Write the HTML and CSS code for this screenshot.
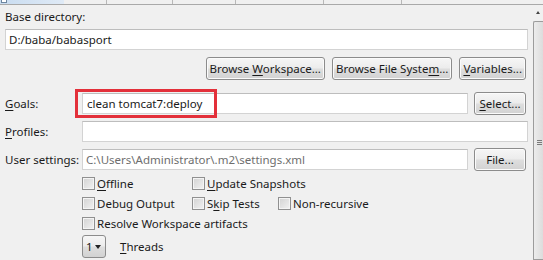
FILE: index.html
```html
<!DOCTYPE html>
<html>
<head>
<meta charset="utf-8">
<link rel="stylesheet" href="styles.css">
</head>
<body>
<div class="page">
  <div class="tabs">
    <div class="tab sel"><span class="ticon"></span></div>
    <div class="tab t2"></div>
    <div class="tab t3"></div>
    <div class="tab t4"></div>
    <div class="tab t5"></div>
    <div class="tab t6"></div>
    <div class="tab rest"></div>
  </div>
  <div class="body">
    <div class="main">
      <div class="lbl top">Base directory:</div>
      <div class="input wide">D:/baba/babasport</div>
      <div class="btnrow">
        <button class="btn">Browse <u>W</u>orkspace...</button>
        <button class="btn">Browse File Syste<u>m</u>...</button>
        <button class="btn"><u>V</u>ariables...</button>
      </div>
      <div class="form">
        <div class="lbl"><u>G</u>oals:</div>
        <div class="field goals">
          <div class="input">clean tomcat7:deploy</div>
          <div class="mark"></div>
        </div>
        <button class="btn small"><u>S</u>elect...</button>

        <div class="lbl"><u>P</u>rofiles:</div>
        <div class="field span"><div class="input"></div></div>

        <div class="lbl">User settings:</div>
        <div class="field"><div class="input gray">C:\Users\Administrator\.m2\settings.xml</div></div>
        <button class="btn small">File...</button>
      </div>
      <div class="checks">
        <label class="chk"><span class="box"></span><span><u>O</u>ffline</span></label>
        <label class="chk"><span class="box"></span><span><u>U</u>pdate Snapshots</span></label>
        <span></span>
        <label class="chk"><span class="box"></span><span>Debug Output</span></label>
        <label class="chk"><span class="box"></span><span>S<u>k</u>ip Tests</span></label>
        <label class="chk"><span class="box"></span><span>Non-recursive</span></label>
        <label class="chk all"><span class="box"></span><span>Resolve Workspace artifacts</span></label>
      </div>
      <div class="threads">
        <div class="combo"><span>1</span><span class="arrow"></span></div>
        <span class="tlbl"><u>T</u>hreads</span>
      </div>
    </div>
    <div class="scroll">
      <div class="up"></div>
      <div class="thumb"><span class="grip"></span></div>
    </div>
  </div>
</div>
</body>
</html>
```
FILE: styles.css
```css
html, body {
  margin: 0;
  padding: 0;
  background: #f0f0f0;
}
body {
  font-family: "Noto Sans", "Open Sans", sans-serif;
  font-size: 11.5px;
  color: #1a1a1a;
  width: 543px;
  height: 260px;
  overflow: hidden;
}
u { text-decoration: underline; text-underline-offset: 2px; }
.page { display: flex; flex-direction: column; height: 260px; }
.tabs {
  display: flex;
  height: 4px;
  border-bottom: 1px solid #a9a9a9;
}
.tab { height: 4px; border-right: 1px solid #b8b8b8; }
.tab.sel {
  width: 64px;
  background: linear-gradient(90deg, #c9dcf0, #dfeaf6);
  border-right: none;
  position: relative;
}
.ticon {
  position: absolute;
  left: 1px; top: 0;
  width: 4px; height: 2px;
  border: 1px solid #6d86a0;
  border-top: none;
  background: #fff;
}
.t2 { width: 42px; }
.t3 { width: 65px; }
.t4 { width: 62px; }
.t5 { width: 87px; }
.t6 { width: 77px; }
.rest { flex: 1; border-right: none; }

.body { display: flex; flex: 1; }
.main {
  width: 523px;
  padding: 0 5px;
  flex: none;
}
.lbl { line-height: 16px; white-space: nowrap; }
.lbl.top { margin-top: 4px; height: 16px; }
.input {
  box-sizing: border-box;
  height: 21px;
  background: #fff;
  border: 1px solid #d3d3d3;
  border-top-color: #bdbdbd;
  padding: 0 4px;
  line-height: 19px;
  white-space: nowrap;
  overflow: hidden;
}
.input.gray { color: #6e6e6e; padding-left: 3px; }
.input.wide { margin-top: 4px; padding-left: 3px; }
.btnrow {
  display: flex;
  justify-content: flex-end;
  gap: 7px;
  margin-top: 7px;
  padding-right: 2px;
}
.btn {
  box-sizing: border-box;
  height: 23px;
  padding: 0 3px;
  font: inherit;
  color: #1a1a1a;
  border: 1px solid #8c8c8c;
  border-radius: 3px;
  background: linear-gradient(#f6f6f6 0%, #ececec 48%, #dedede 52%, #d2d2d2 100%);
  box-shadow: inset 0 0 0 1px #fbfbfb;
  white-space: nowrap;
}
.form {
  display: grid;
  grid-template-columns: 71px 1fr 54px;
  column-gap: 6px;
  row-gap: 6px;
  margin-top: 12px;
  align-items: center;
}
.form .btn.small { width: 52px; padding: 0; margin-right: 2px; justify-self: end; }
.field { position: relative; }
.field.span { grid-column: 2 / 4; }
.goals .input { padding-left: 4px; }
.mark {
  position: absolute;
  left: -7px; top: -4px;
  width: 136px; height: 23px;
  border: 3px solid #e3303a;
}
.checks {
  display: grid;
  grid-template-columns: 110px 86px auto;
  row-gap: 4px;
  margin: 4px 0 0 77px;
}
.chk { display: flex; align-items: center; gap: 2px; height: 16px; white-space: nowrap; }
.chk.all { grid-column: 1 / 4; }
.box {
  box-sizing: border-box;
  width: 13px; height: 13px;
  border: 1px solid #909090;
  background: linear-gradient(135deg, #d2d2d2, #f2f2f2);
  box-shadow: inset 0 0 0 1px #f4f4f4;
  flex: none;
}
.threads {
  display: flex;
  align-items: center;
  gap: 14px;
  margin: 4px 0 0 77px;
}
.combo {
  box-sizing: border-box;
  width: 24px; height: 23px;
  border: 1px solid #8c8c8c;
  border-radius: 3px;
  background: linear-gradient(#f6f6f6 0%, #ececec 48%, #dedede 52%, #d2d2d2 100%);
  display: flex;
  align-items: center;
  justify-content: space-between;
  padding: 0 4px 0 3px;
}
.arrow {
  width: 0; height: 0;
  border-left: 3px solid transparent;
  border-right: 3px solid transparent;
  border-top: 4px solid #222;
}
.scroll {
  width: 10px;
  flex: none;
  display: flex;
  flex-direction: column;
  align-items: stretch;
}
.up {
  height: 16px;
  position: relative;
}
.up::after {
  content: "";
  position: absolute;
  left: 3px; top: 6px;
  border-left: 2px solid transparent;
  border-right: 2px solid transparent;
  border-bottom: 3px solid #444;
}
.thumb {
  flex: 1;
  border: 1px solid #9c9c9c;
  border-right: none;
  border-radius: 2px 0 0 0;
  background: linear-gradient(90deg, #ececec, #dcdcdc);
  position: relative;
}
.grip {
  position: absolute;
  left: 3px; top: 118px;
  width: 5px; height: 5px;
  background: repeating-linear-gradient(#7a7a7a 0 1px, transparent 1px 2px);
}
```
